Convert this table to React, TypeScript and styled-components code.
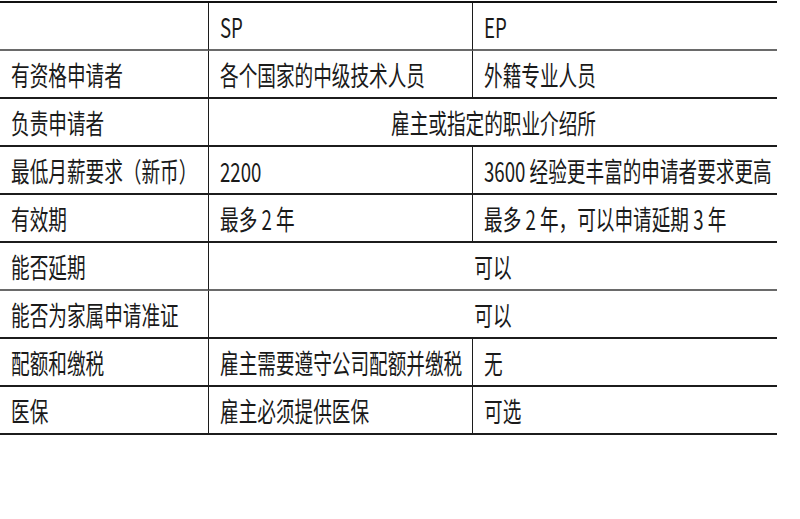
import styled, { createGlobalStyle } from "styled-components";

const GlobalStyle = createGlobalStyle`
  html, body {
    margin: 0;
    padding: 0;
    background: #ffffff;
  }
  body {
    font-family: "Noto Sans CJK SC", "Noto Sans", sans-serif;
    color: #1a1a1a;
  }
`;

type Row = {
  label: string;
  sp?: string;
  ep?: string;
  both?: string;
  light?: boolean;
};

const rows: Row[] = [
  { label: "", sp: "SP", ep: "EP", light: true },
  { label: "有资格申请者", sp: "各个国家的中级技术人员", ep: "外籍专业人员" },
  { label: "负责申请者", both: "雇主或指定的职业介绍所" },
  { label: "最低月薪要求（新币）", sp: "2200", ep: "3600 经验更丰富的申请者要求更高" },
  { label: "有效期", sp: "最多 2 年", ep: "最多 2 年，可以申请延期 3 年" },
  { label: "能否延期", both: "可以", light: true },
  { label: "能否为家属申请准证", both: "可以" },
  { label: "配额和缴税", sp: "雇主需要遵守公司配额并缴税", ep: "无" },
  { label: "医保", sp: "雇主必须提供医保", ep: "可选" },
];

const Page = styled.div`
  padding-top: 1px;
`;

const Table = styled.div`
  width: 777px;
  display: grid;
  grid-template-columns: 208px 264px 305px;
  grid-auto-rows: 48px;
  border-top: 2px solid #111;
`;

const Cell = styled.div<{ $span?: boolean; $divider?: boolean; $light?: boolean }>`
  grid-column: ${(p) => (p.$span ? "span 2" : "auto")};
  display: flex;
  align-items: center;
  justify-content: ${(p) => (p.$span ? "center" : "flex-start")};
  padding-left: ${(p) => (p.$span ? "0" : "11px")};
  border-bottom: 2px solid ${(p) => (p.$light ? "#6a6a6a" : "#1c1c1c")};
  border-left: ${(p) => (p.$divider ? "1.5px solid #1c1c1c" : "none")};
  box-sizing: border-box;
  white-space: nowrap;
  overflow: visible;
`;

const Text = styled.span<{ $center?: boolean }>`
  display: inline-block;
  font-size: 27px;
  line-height: 1;
  transform: scaleX(0.69);
  transform-origin: ${(p) => (p.$center ? "center" : "left")} center;
  color: #1a1a1a;
`;

export default function App() {
  return (
    <Page>
      <GlobalStyle />
      <Table>
        {rows.map((r, i) => (
          <Row key={i} row={r} />
        ))}
      </Table>
    </Page>
  );
}

function Row({ row }: { row: Row }) {
  return (
    <>
      <Cell $light={row.light}>
        <Text>{row.label}</Text>
      </Cell>
      {row.both !== undefined ? (
        <Cell $span $divider $light={row.light}>
          <Text $center>{row.both}</Text>
        </Cell>
      ) : (
        <>
          <Cell $divider $light={row.light}>
            <Text>{row.sp}</Text>
          </Cell>
          <Cell $divider $light={row.light}>
            <Text>{row.ep}</Text>
          </Cell>
        </>
      )}
    </>
  );
}
